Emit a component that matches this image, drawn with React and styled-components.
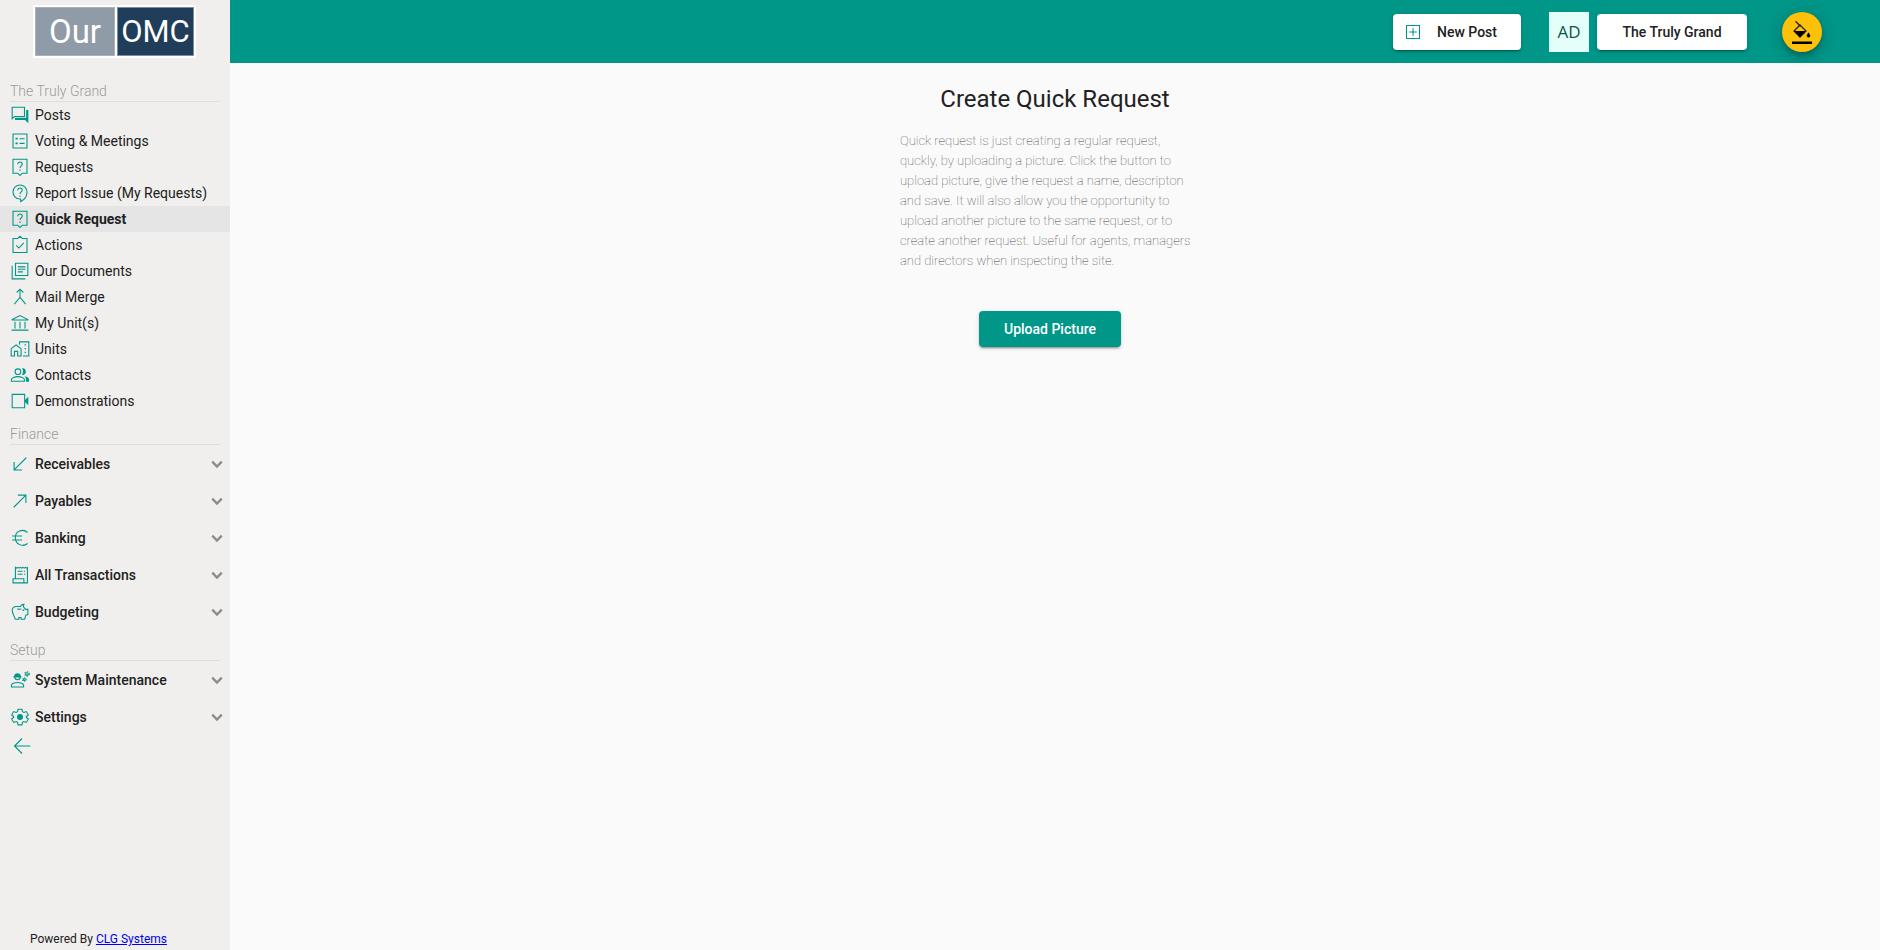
import React from "react";
import styled, { createGlobalStyle } from "styled-components";

const GlobalStyle = createGlobalStyle`
  *, *::before, *::after {
    box-sizing: border-box;
  }
  body {
    margin: 0;
    background: #fafafa;
    color: #212121;
    font-family: Roboto, "Liberation Sans", sans-serif;
    font-size: 14px;
  }
  button {
    font-family: inherit;
    border: 0;
    cursor: pointer;
  }
`;

const Layout = styled.div`
  display: flex;
  min-height: 100vh;
`;

const Sidebar = styled.aside`
  display: flex;
  flex-direction: column;
  flex: 0 0 230px;
  background: #f0efed;
`;

const Logo = styled.a`
  display: flex;
  gap: 2px;
  align-self: flex-start;
  margin: 5px 0 13px 33px;
  padding: 2px;
  background: #fff;
  color: #fff;
  line-height: 47px;
  text-align: center;
  text-decoration: none;
`;

const LogoPart = styled.span`
  width: ${({ $dark }) => ($dark ? 77 : 80)}px;
  height: 49px;
  border: 1px solid ${({ $dark }) => ($dark ? "#7d8da0" : "#a9b2bb")};
  background: ${({ $dark }) => ($dark ? "#203d5a" : "#8f9ba7")};
  font-size: ${({ $dark }) => ($dark ? 31 : 33)}px;
`;

const SectionTitle = styled.h2`
  margin: 0 10px;
  padding-top: 10px;
  border-bottom: 1px solid #dededd;
  color: #9b9b9b;
  font-size: 14px;
  font-weight: 300;
  line-height: 20px;
`;

const List = styled.ul`
  margin: 0;
  padding: 0;
  list-style: none;
`;

const NavLink = styled.a`
  display: flex;
  align-items: center;
  gap: 5px;
  height: 26px;
  padding-left: 10px;
  background: ${({ $active }) => ($active ? "#e5e5e5" : "transparent")};
  color: #212121;
  font-weight: ${({ $active }) => ($active ? 700 : 400)};
  text-decoration: none;
`;

const GroupButton = styled.button`
  display: flex;
  align-items: center;
  gap: 5px;
  width: 100%;
  height: 37px;
  padding: 0 2px 0 10px;
  background: transparent;
  color: #212121;
  font-size: 14px;
  font-weight: 500;
  text-align: left;

  span {
    flex: 1;
  }
`;

const CollapseButton = styled.button`
  display: flex;
  align-self: flex-start;
  margin-left: 12px;
  padding: 1px 0;
  background: transparent;
`;

const Powered = styled.footer`
  margin-top: auto;
  padding: 0 0 3px 30px;
  font-size: 12px;
  line-height: 16px;

  a {
    color: #0000ee;
  }
`;

const Icon = styled.svg`
  flex: none;
  width: 20px;
  height: 20px;
  fill: none;
  stroke: #009688;
  stroke-width: 1.3;

  .solid {
    fill: #009688;
    stroke: none;
  }
`;

const Chevron = styled.svg`
  flex: none;
  width: 22px;
  height: 22px;
  fill: none;
  stroke: #8c8c8b;
  stroke-width: 2.6;
`;

const Page = styled.div`
  display: flex;
  flex: 1;
  flex-direction: column;
`;

const TopBar = styled.header`
  display: flex;
  align-items: center;
  justify-content: flex-end;
  height: 63px;
  padding-right: 58px;
  background: #009688;
`;

const Raised = styled.button`
  display: inline-flex;
  align-items: center;
  justify-content: ${({ $start }) => ($start ? "flex-start" : "center")};
  gap: 14px;
  min-width: ${({ $width }) => $width}px;
  height: 36px;
  padding: 0 10px;
  border-radius: 4px;
  background: ${({ $primary }) => ($primary ? "#009688" : "#fff")};
  box-shadow: 0 3px 1px -2px rgba(0, 0, 0, 0.2), 0 2px 2px rgba(0, 0, 0, 0.14),
    0 1px 5px rgba(0, 0, 0, 0.12);
  color: ${({ $primary }) => ($primary ? "#fff" : "#212121")};
  font-size: 14px;
  font-weight: 500;
`;

const Avatar = styled.div`
  display: grid;
  place-items: center;
  width: 40px;
  height: 40px;
  margin: 0 8px 0 28px;
  background: #e4fffa;
  color: #0b5549;
  font-family: "Open Sans", sans-serif;
  font-size: 17px;
`;

const ThemeButton = styled.button`
  display: grid;
  place-items: center;
  width: 40px;
  height: 40px;
  margin-left: 35px;
  padding: 0;
  border-radius: 50%;
  background: #ffc107;
  box-shadow: 0 3px 5px -1px rgba(0, 0, 0, 0.2), 0 6px 10px rgba(0, 0, 0, 0.14),
    0 1px 18px rgba(0, 0, 0, 0.12);
`;

const Content = styled.main`
  display: flex;
  flex-direction: column;
  align-items: center;
  padding-top: 20px;

  h1 {
    margin: 0;
    font-size: 24px;
    font-weight: 400;
    line-height: 32px;
  }
`;

const Intro = styled.div`
  width: 310px;
  margin-top: 16px;

  p {
    margin: 0 10px 40px 0;
    color: #424242;
    font-size: 13px;
    font-weight: 100;
    line-height: 20px;
  }
`;

const Actions = styled.div`
  display: flex;
  justify-content: center;
  padding-right: 10px;
`;

const QuestionMark = () => (
  <>
    <path d="M9.3 8.6c0-1.6 1.2-2.6 2.7-2.6s2.7 1 2.7 2.5c0 2.2-2.7 2.3-2.7 4.8" />
    <path d="M11.2 15h1.6v1.6h-1.6z" className="solid" />
  </>
);

const icons = {
  posts: (
    <>
      <path d="M2.6 2.6h14.8v11.2H5.4l-2.8 2.6z" />
      <path d="M19.4 6H22v16l-4-4H6v-2.600h13.400z" className="solid" />
    </>
  ),
  voting: (
    <>
      <path d="M3.6 3.6h16.8v16.8H3.6zM11.5 9.2h6M11.5 14.8h6" />
      <path d="M6.6 8.2h2.6v2H6.6zM6.6 13.8h2.6v2H6.6z" className="solid" />
    </>
  ),
  help: (
    <>
      <path d="M3.6 2.6h16.8v16.8h-5.6L12 22.2l-2.8-2.8H3.6z" />
      <QuestionMark />
    </>
  ),
  report: (
    <>
      <path d="M12.8 22.4v-3.200h-1.200a8.400 8.400 0 1 1 8.800-8.400c0 5-3.200 9.400-7.600 11.600z" />
      <QuestionMark />
    </>
  ),
  actions: <path d="M3.6 4.2h5.6L12 1.6l2.8 2.6h5.6V21H3.6zM7.400 12.500l3.200 3.200 6-6.200" />,
  documents: (
    <>
      <path d="M6.6 2.6h14.8v14.8H6.6zM9.500 7h9M9.500 10h9M9.500 13h6" />
      <path d="M2.6 5.800v15.600h15.800" />
    </>
  ),
  merge: <path d="M12 3v9.500l-6.800 8M12 12.500l6.800 8M8 6.600l4-4 4 4" />,
  bank: <path d="M2.600 7.800L12 3l9.400 4.800v.6H2.600zM2 20.500h20M6 10.500v8M12 10.500v8M18 10.500v8" />,
  units: (
    <>
      <path d="M1.400 20.400v-8.800l5.900-4.400 6 4.400v8.800H9.200v-5.600H5.400v5.600z" />
      <path d="M11.400 7V3.400h11.200v17h-7" />
      <path d="M17.500 7h1.600M17.500 11.500h1.600M17.500 16h1.600" />
    </>
  ),
  contacts: (
    <>
      <circle cx="9.500" cy="8" r="3.400" />
      <path d="M1.700 19.400v-2c0-2 4.200-3.500 7.800-3.500s7.800 1.500 7.800 3.500v2z" />
      <path
        d="M14.200 4c3.500-.6 4.800 1.800 4.800 4s-1.500 4.400-4.800 4c2-2.200 2-5.800 0-8zM17.500 13.600c3 .5 5.300 1.800 5.300 3.800v2.600h-3.600v-2.600c0-1.600-.6-2.800-1.700-3.800z"
        className="solid"
      />
    </>
  ),
  video: (
    <>
      <path d="M2.600 4h15v16h-15z" />
      <path d="M17.600 11l4.400-4v10l-4.400-4z" className="solid" />
    </>
  ),
  receivables: <path d="M19.500 4.500l-14 14M4.900 9.500v9.600h9.600" />,
  payables: <path d="M4.500 19.500l14-14M9.500 4.900h9.600v9.600" />,
  euro: <path d="M21 5.400A8.600 8.600 0 0 0 6.400 12c0 7.600 9 11.400 14.600 6.600M2.500 9.600h12M2.500 14.400h12" />,
  receipt: (
    <>
      <path d="M6.500 16.500V2.800l1.400 1 1.600-1 1.500 1 1.500-1 1.500 1 1.500-1 1.500 1 1.500-1 1.600 1 .8-.6V21.400H3.600v-4.900h13v3.200c0 1 .8 1.700 2 1.700" />
      <path d="M9 7.500h6M9 11h6M16.700 7.500h1.500M16.700 11h1.500" />
    </>
  ),
  savings: (
    <>
      <path d="M6.400 20.600C4.400 15.500 2.600 13 2.600 10c0-2.600 2-4.600 4.700-4.600h5.200c.8-1.600 2.500-2.600 4.200-2.600-.6 1.300-.6 2.300-.4 3.200l2.500 2.800h2.600v6.200l-2.400.8-1.400 4.800h-4.400v-2h-2.600v2z" />
      <path d="M8.500 8.600h5" />
      <path d="M15.200 9h1.900v1.900h-1.900z" className="solid" />
    </>
  ),
  engineering: (
    <>
      <path d="M1.700 20.400v-2.200c0-1.900 4-3.300 7.300-3.300s7.300 1.400 7.300 3.300v2.200z" />
      <path d="M5.800 8.500a3.200 3.200 0 0 0 6.400 0" />
      <path d="M5 7.200C5.200 5.200 6.800 3.900 9 3.900s3.800 1.300 4 3.300h.7v1.700H4.300V7.200z" className="solid" />
      <circle cx="20.400" cy="4.800" r="1.600" />
      <circle cx="20.400" cy="4.800" r="2.700" strokeDasharray="1.400 1.430" />
      <circle cx="17.200" cy="11.400" r="1.200" />
      <circle cx="17.200" cy="11.400" r="2.100" strokeDasharray="1.100 1.100" />
    </>
  ),
  settings: (
    <>
      <path d="M9.600 2.600h4.800l.5 3 1.800 1 2.900-1.100L22 9.600l-2.400 1.900v1l2.400 1.900-2.400 4.100-2.900-1.100-1.800 1-.5 3H9.600l-.5-3-1.800-1-2.900 1.100L2 14.400l2.400-1.900v-1L2 9.600l2.400-4.100 2.900 1.100 1.800-1z" />
      <circle cx="12" cy="12" r="3.600" className="solid" />
    </>
  ),
  back: <path d="M22 12H4M12 3l-9 9 9 9" />,
  add: <path d="M4.200 4.200h15.600v15.600H4.200zM12 7.500v9M7.500 12h9" />,
};

const community = [
  { label: "Posts", icon: "posts" },
  { label: "Voting & Meetings", icon: "voting" },
  { label: "Requests", icon: "help" },
  { label: "Report Issue (My Requests)", icon: "report" },
  { label: "Quick Request", icon: "help", active: true },
  { label: "Actions", icon: "actions" },
  { label: "Our Documents", icon: "documents" },
  { label: "Mail Merge", icon: "merge" },
  { label: "My Unit(s)", icon: "bank" },
  { label: "Units", icon: "units" },
  { label: "Contacts", icon: "contacts" },
  { label: "Demonstrations", icon: "video" },
];

const finance = [
  { label: "Receivables", icon: "receivables" },
  { label: "Payables", icon: "payables" },
  { label: "Banking", icon: "euro" },
  { label: "All Transactions", icon: "receipt" },
  { label: "Budgeting", icon: "savings" },
];

const setup = [
  { label: "System Maintenance", icon: "engineering" },
  { label: "Settings", icon: "settings" },
];

function Glyph({ name }) {
  return (
    <Icon viewBox="0 0 24 24" aria-hidden="true">
      {icons[name]}
    </Icon>
  );
}

function Groups({ items }) {
  return (
    <List>
      {items.map((item) => (
        <li key={item.label}>
          <GroupButton type="button" aria-expanded="false">
            <Glyph name={item.icon} />
            <span>{item.label}</span>
            <Chevron viewBox="0 0 24 24" aria-hidden="true">
              <path d="M6.800 9.500l5.200 5.200 5.200-5.200" />
            </Chevron>
          </GroupButton>
        </li>
      ))}
    </List>
  );
}

export default function App() {
  return (
    <Layout>
      <GlobalStyle />
      <Sidebar>
        <Logo href="#">
          <LogoPart>Our</LogoPart>
          <LogoPart $dark>OMC</LogoPart>
        </Logo>
        <nav>
          <SectionTitle>The Truly Grand</SectionTitle>
          <List>
            {community.map((item) => (
              <li key={item.label}>
                <NavLink href="#" $active={item.active}>
                  <Glyph name={item.icon} />
                  {item.label}
                </NavLink>
              </li>
            ))}
          </List>
          <SectionTitle>Finance</SectionTitle>
          <Groups items={finance} />
          <SectionTitle>Setup</SectionTitle>
          <Groups items={setup} />
        </nav>
        <CollapseButton type="button" aria-label="Collapse menu">
          <Glyph name="back" />
        </CollapseButton>
        <Powered>
          Powered By <a href="#">CLG Systems</a>
        </Powered>
      </Sidebar>
      <Page>
        <TopBar>
          <Raised type="button" $start $width={128}>
            <Glyph name="add" />
            New Post
          </Raised>
          <Avatar>AD</Avatar>
          <Raised type="button" $width={150}>
            The Truly Grand
          </Raised>
          <ThemeButton type="button" aria-label="Change theme">
            <svg width="24" height="24" viewBox="0 0 24 24">
              <path d="M5.500 1.200l5 5M10 5l6 6-6 6-6-6z" fill="none" stroke="#212121" strokeWidth="1.300" />
              <path d="M4 11h12l-6 6zM18.500 12.500s-1.800 2-1.800 3.200a1.800 1.800 0 0 0 3.600 0c0-1.200-1.800-3.200-1.800-3.200zM2 21.500h20V24H2z" />
            </svg>
          </ThemeButton>
        </TopBar>
        <Content>
          <h1>Create Quick Request</h1>
          <Intro>
            <p>
              Quick request is just creating a regular request, quckly, by
              uploading a picture. Click the button to upload picture, give the
              request a name, descripton and save. It will also allow you the
              opportunity to upload another picture to the same request, or to
              create another request. Useful for agents, managers and directors
              when inspecting the site.
            </p>
            <Actions>
              <Raised type="button" $primary $width={142}>
                Upload Picture
              </Raised>
            </Actions>
          </Intro>
        </Content>
      </Page>
    </Layout>
  );
}
